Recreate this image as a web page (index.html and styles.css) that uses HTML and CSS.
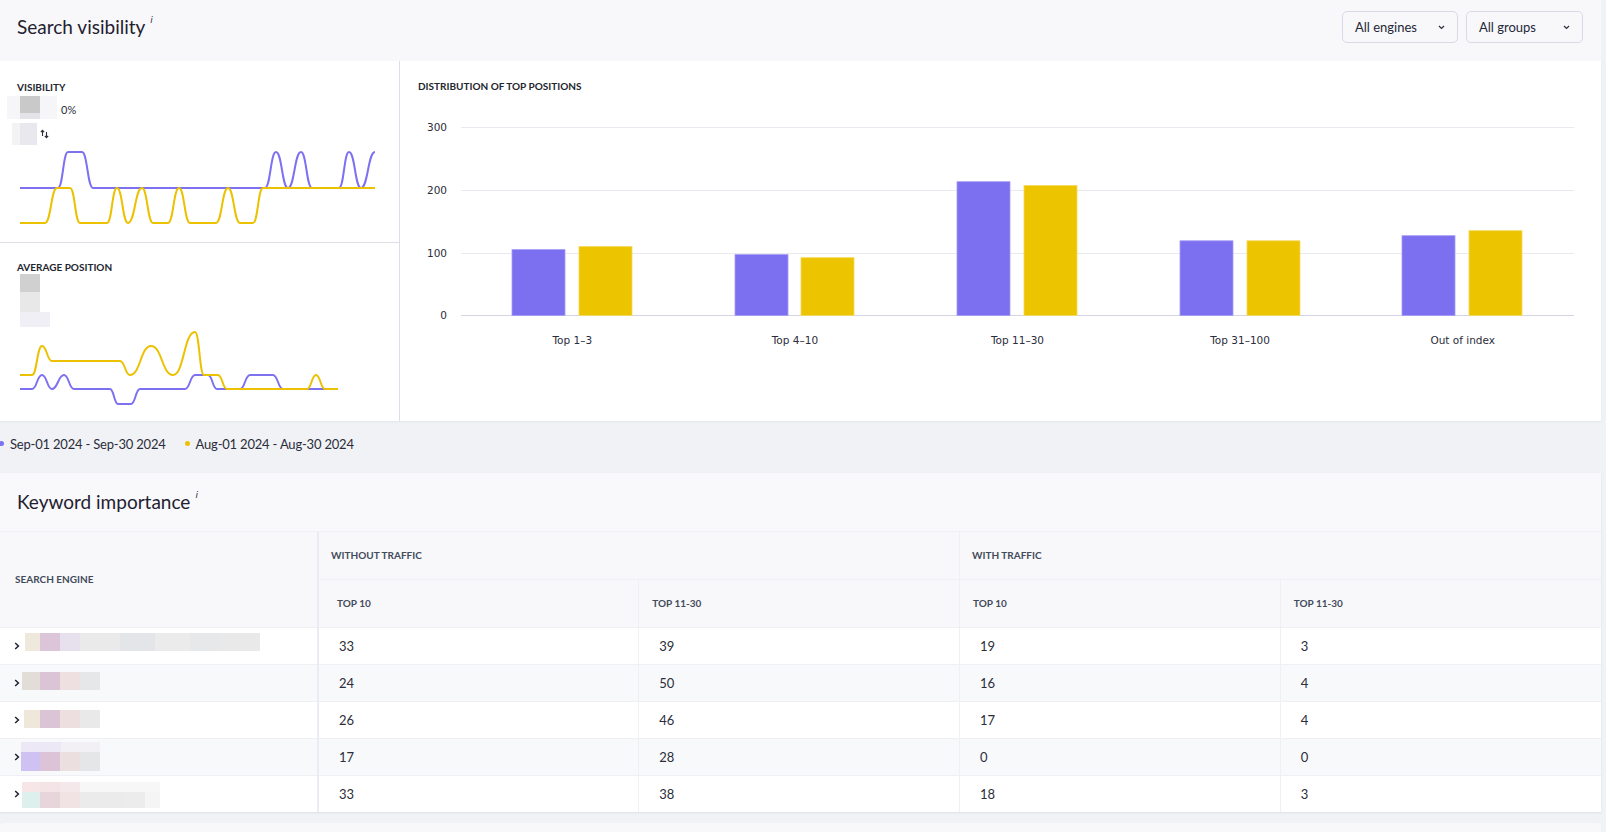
FILE: index.html
```html
<!DOCTYPE html>
<html lang="en">
<head>
<meta charset="utf-8">
<title>Search visibility</title>
<link rel="stylesheet" href="styles.css">
</head>
<body>
<div class="page">
  <section class="sv">
    <header class="sv-head">
      <h2 class="title">Search visibility<span class="info">i</span></h2>
      <div class="filters">
        <button class="select sel-engines">All engines<svg class="chev-down" width="7" height="5" viewBox="0 0 7 5"><path d="M1 1 L3.5 3.5 L6 1" fill="none" stroke="#2b2d3a" stroke-width="1.2"/></svg></button>
        <button class="select sel-groups">All groups<svg class="chev-down" width="7" height="5" viewBox="0 0 7 5"><path d="M1 1 L3.5 3.5 L6 1" fill="none" stroke="#2b2d3a" stroke-width="1.2"/></svg></button>
      </div>
    </header>
    <div class="sv-body">
      <div class="sv-left">
        <div class="mini mini-vis">
          <div class="label">Visibility</div>
          <div class="vis-row1"><span class="redact ra"><span class="ra-in"></span></span><span class="pct">0%</span></div>
          <div class="vis-row2"><span class="redact rb"></span>
            <svg class="arrows" width="9" height="10" viewBox="0 0 9 10"><path d="M2.5 7 V1.5 M0.8 3.2 L2.5 1.3 L4.2 3.2" fill="none" stroke="#2b2d3a" stroke-width="1.1"/><path d="M6.5 3 V8.5 M4.8 6.8 L6.5 8.7 L8.2 6.8" fill="none" stroke="#2b2d3a" stroke-width="1.1"/></svg>
          </div>
          <svg class="spark spark-vis" width="399" height="80" viewBox="0 0 399 80">
            <path class="ln-p" d="M20,40 L58,40 C63,40 63,4 68,4 L82,4 C87.5,4 87.5,40 93,40 L265,40 C270.5,40 270.5,4 276,4 C282,4 282,40 288,40 C294.5,40 294.5,4 301,4 C306.5,4 306.5,40 312,40 L339,40 C344,40 344,4 349,4 C355,4 355,40 361,40 C368,40 368,4 375,4"/>
            <path class="ln-y" d="M20,75 L45,75 C51,75 51,40 57,40 L70,40 C75,40 75,75 80,75 L107,75 C112,75 112,40 117,40 C122.5,40 122.5,75 128,75 C135,75 135,40 142,40 C147.5,40 147.5,75 153,75 L168,75 C173.5,75 173.5,40 179,40 C184.5,40 184.5,75 190,75 L216,75 C222,75 222,40 228,40 C234,40 234,75 240,75 L253,75 C258,75 258,40 263,40 L375,40"/>
          </svg>
        </div>
        <div class="mini mini-avg">
          <div class="label">Average position</div>
          <div class="avg-blocks"><span class="ab ab1"></span><span class="ab ab2"></span><span class="ab ab3"></span></div>
          <svg class="spark spark-avg" width="399" height="84" viewBox="0 0 399 84">
            <path class="ln-p" d="M20,62 L32,62 C37,62 37,48 42,48 C47,48 47,62 52,62 C58,62 58,48 64,48 C69,48 69,62 74,62 L110,62 C114,62 114,77 118,77 L131,77 C135.5,77 135.5,62 140,62 L185,62 C190,62 190,48 195,48 L208,48 C212.5,48 212.5,62 217,62 L240,62 C245,62 245,48 250,48 L273,48 C278,48 278,62 283,62 L338,62"/>
            <path class="ln-y" d="M20,48 L32,48 C37,48 37,19 42,19 C47,19 47,34 52,34 L120,34 C125,34 125,48 130,48 C140.5,48 140.5,19 151,19 C162,19 162,48 173,48 C184,48 184,5 195,5 C199.5,5 199.5,48 204,48 L218,48 C222.5,48 222.5,62 227,62 L307,62 C311.5,62 311.5,48 316,48 C320.5,48 320.5,62 325,62 L338,62"/>
          </svg>
        </div>
      </div>
      <div class="sv-right">
        <div class="label label-dist">Distribution of top positions</div>
        <svg class="bars" width="1201" height="329" viewBox="0 0 1201 329">
          <g class="grid">
            <line x1="61" x2="1174" y1="35.5" y2="35.5"/>
            <line x1="61" x2="1174" y1="98.5" y2="98.5"/>
            <line x1="61" x2="1174" y1="161.5" y2="161.5"/>
          </g>
          <line class="base" x1="61" x2="1174" y1="223.5" y2="223.5"/>
          <g class="ylab">
            <text x="47" y="39">300</text>
            <text x="47" y="102">200</text>
            <text x="47" y="165">100</text>
            <text x="47" y="227">0</text>
          </g>
          <g class="bp">
            <rect x="112" y="157.6" width="53" height="65.9"/>
            <rect x="335" y="162.6" width="53" height="60.9"/>
            <rect x="557" y="89.7" width="53" height="133.8"/>
            <rect x="780" y="148.8" width="53" height="74.7"/>
            <rect x="1002" y="143.7" width="53" height="79.8"/>
          </g>
          <g class="by">
            <rect x="179" y="154.5" width="53" height="69"/>
            <rect x="401" y="165.7" width="53" height="57.8"/>
            <rect x="624" y="93.5" width="53" height="130"/>
            <rect x="847" y="148.8" width="53" height="74.7"/>
            <rect x="1069" y="138.7" width="53" height="84.8"/>
          </g>
          <g class="xlab">
            <text x="172.3" y="252">Top 1–3</text>
            <text x="394.9" y="252">Top 4–10</text>
            <text x="617.5" y="252">Top 11–30</text>
            <text x="840.1" y="252">Top 31–100</text>
            <text x="1062.7" y="252">Out of index</text>
          </g>
        </svg>
      </div>
    </div>
  </section>

  <div class="legend">
    <span class="lg-item"><span class="dot dot-p"></span>Sep-01 2024 - Sep-30 2024</span>
    <span class="lg-item"><span class="dot dot-y"></span>Aug-01 2024 - Aug-30 2024</span>
  </div>

  <section class="ki">
    <header class="ki-head">
      <h2 class="title">Keyword importance<span class="info">i</span></h2>
    </header>
    <table class="kt">
      <colgroup>
        <col class="col-eng"><col class="col-n"><col class="col-n"><col class="col-n"><col class="col-n">
      </colgroup>
      <thead>
        <tr class="h1">
          <th rowspan="2" class="th-eng">Search engine</th>
          <th colspan="2" class="th-grp">Without traffic</th>
          <th colspan="2" class="th-grp">With traffic</th>
        </tr>
        <tr class="h2">
          <th class="th-sub th-first">Top 10</th>
          <th class="th-sub">Top 11-30</th>
          <th class="th-sub">Top 10</th>
          <th class="th-sub">Top 11-30</th>
        </tr>
      </thead>
      <tbody>
        <tr>
          <td class="eng"><div class="eng-in"><svg class="rchev" width="6" height="8" viewBox="0 0 6 8"><path d="M1.2 1 L4.4 4 L1.2 7" fill="none" stroke="#1f2130" stroke-width="1.5"/></svg><span class="rd rd1"></span></div></td>
          <td>33</td><td>39</td><td>19</td><td>3</td>
        </tr>
        <tr>
          <td class="eng"><div class="eng-in"><svg class="rchev" width="6" height="8" viewBox="0 0 6 8"><path d="M1.2 1 L4.4 4 L1.2 7" fill="none" stroke="#1f2130" stroke-width="1.5"/></svg><span class="rd rd2"></span></div></td>
          <td>24</td><td>50</td><td>16</td><td>4</td>
        </tr>
        <tr>
          <td class="eng"><div class="eng-in"><svg class="rchev" width="6" height="8" viewBox="0 0 6 8"><path d="M1.2 1 L4.4 4 L1.2 7" fill="none" stroke="#1f2130" stroke-width="1.5"/></svg><span class="rd rd3"></span></div></td>
          <td>26</td><td>46</td><td>17</td><td>4</td>
        </tr>
        <tr>
          <td class="eng"><div class="eng-in"><svg class="rchev" width="6" height="8" viewBox="0 0 6 8"><path d="M1.2 1 L4.4 4 L1.2 7" fill="none" stroke="#1f2130" stroke-width="1.5"/></svg><span class="rd rd4"></span></div></td>
          <td>17</td><td>28</td><td>0</td><td>0</td>
        </tr>
        <tr>
          <td class="eng"><div class="eng-in"><svg class="rchev" width="6" height="8" viewBox="0 0 6 8"><path d="M1.2 1 L4.4 4 L1.2 7" fill="none" stroke="#1f2130" stroke-width="1.5"/></svg><span class="rd rd5"></span></div></td>
          <td>33</td><td>38</td><td>18</td><td>3</td>
        </tr>
      </tbody>
    </table>
  </section>
  <div class="next-card"></div>
</div>
</body>
</html>
```
FILE: styles.css
```css
* { box-sizing: border-box; }

body {
  margin: 0;
  background: #f1f2f6;
  font-family: Lato, "Noto Sans", sans-serif;
  color: #2b2d3a;
}

.page { width: 1601px; }

/* ---------- Search visibility card ---------- */
.sv-head {
  height: 61px;
  padding: 11px 18px 0 17px;
  display: flex;
  justify-content: space-between;
  align-items: flex-start;
  background: #f8f8fb;
}

.title {
  margin: 0;
  font-size: 19px;
  font-weight: 400;
  line-height: 32px;
  color: #1f2130;
  display: flex;
  align-items: flex-start;
}

.info {
  font-family: "DejaVu Sans", sans-serif;
  font-style: italic;
  font-size: 9px;
  line-height: 9px;
  margin: 5px 0 0 5px;
  color: #2b2d3a;
}

.filters { display: flex; gap: 8px; }

.select {
  height: 32px;
  border: 1px solid #dadae6;
  border-radius: 5px;
  background: #f8f8fb;
  display: flex;
  align-items: center;
  justify-content: space-between;
  padding: 0 12px 0 12px;
  font-family: Lato, "Noto Sans", sans-serif;
  font-size: 13px;
  color: #252737;
}
.sel-engines { width: 116px; }
.sel-groups { width: 117px; }

.sv-body {
  height: 360px;
  display: flex;
  background: #fff;
  box-shadow: 0 1px 2px rgba(30, 30, 60, 0.06);
}

.sv-left {
  width: 400px;
  border-right: 1px solid #dedee9;
  display: flex;
  flex-direction: column;
}

.mini-vis {
  height: 182px;
  border-bottom: 1px solid #dedee9;
}
.mini-avg { flex: 1; }

.label {
  font-size: 10px;
  font-weight: 700;
  line-height: 12px;
  text-transform: uppercase;
  color: #23252f;
  padding-left: 17px;
}
.mini-vis .label { margin-top: 20px; }
.mini-avg .label { margin-top: 18px; }

.vis-row1 {
  margin-top: 3px;
  height: 23px;
  padding-left: 7px;
  display: flex;
  align-items: center;
  gap: 4px;
}
.ra {
  width: 50px;
  height: 23px;
  background: #f6f6f8;
  padding-left: 13px;
  display: block;
}
.ra-in {
  display: block;
  width: 20px;
  height: 23px;
  background: linear-gradient(#c9c9c9 0 17px, #e4e4e8 17px 23px);
}
.pct { font-size: 11px; color: #2b2d3a; padding-top: 4px; }

.vis-row2 {
  margin-top: 4px;
  height: 22px;
  padding-left: 12px;
  display: flex;
  align-items: center;
  gap: 3px;
}
.rb {
  width: 25px;
  height: 22px;
  background: linear-gradient(to right, #f3f3f6 0 8px, #e8e8ee 8px 25px);
}
.arrows { display: block; }

.spark { display: block; }
.spark-vis { margin-top: 3px; }

.ln-p, .ln-y { fill: none; stroke-width: 2; stroke-linejoin: round; }
.ln-p { stroke: #7d70f1; }
.ln-y { stroke: #ecc100; }

.avg-blocks {
  margin-top: 1px;
  height: 53px;
  padding-left: 20px;
  display: flex;
  flex-direction: column;
}
.ab { display: block; }
.ab1 { width: 20px; height: 18px; background: #d0d0d0; }
.ab2 { width: 20px; height: 20px; background: #e8e8e8; }
.ab3 { width: 30px; height: 15px; background: #efeff5; }

.sv-right { flex: 1; }
.label-dist { margin-top: 19px; padding-left: 18px; }
.bars { display: block; }

.grid line { stroke: #e9e9ef; stroke-width: 1; }
.base { stroke: #d3d5e4; stroke-width: 1; }
.ylab text {
  font-family: "DejaVu Sans", sans-serif;
  font-size: 10.5px;
  fill: #2b2d3a;
  text-anchor: end;
}
.xlab text {
  font-family: "DejaVu Sans", sans-serif;
  font-size: 10.5px;
  fill: #2b2d3a;
  text-anchor: middle;
}
.bp rect { fill: #7c6ff0; stroke: #a59cf6; stroke-width: 0.8; }
.by rect { fill: #edc400; stroke: #f4da5c; stroke-width: 0.8; }

/* ---------- Legend ---------- */
.legend {
  height: 52px;
  padding-bottom: 7px;
  display: flex;
  align-items: center;
  gap: 19px;
  font-size: 13px;
  letter-spacing: -0.2px;
  color: #2b2d3a;
}
.lg-item { display: flex; align-items: center; }
.dot {
  width: 5px;
  height: 5px;
  border-radius: 50%;
  margin-right: 6px;
}
.dot-p { background: #7d70f1; margin-left: -1px; }
.dot-y { background: #ecc100; }

/* ---------- Keyword importance ---------- */
.ki {
  background: #fff;
  box-shadow: 0 1px 2px rgba(30, 30, 60, 0.08);
}
.ki-head {
  height: 59px;
  padding-left: 17px;
  display: flex;
  align-items: center;
  background: #f9f9fb;
  border-bottom: 1px solid #efeff4;
}

.kt {
  width: 1601px;
  border-collapse: collapse;
  table-layout: fixed;
}
.col-eng { width: 318px; }
.col-n { width: 320.75px; }

.kt th {
  background: #f8f8fa;
  text-align: left;
  font-size: 10px;
  font-weight: 700;
  text-transform: uppercase;
  color: #434b5a;
  padding: 0 0 0 13px;
  border: 1px solid #efeff4;
  border-top: 0;
}
.kt .h1 th { height: 47px; }
.kt .h2 th { height: 48px; }
.kt th.th-eng { padding-left: 15px; border-left: 0; border-right: 2px solid #ebebf3; }
.kt th.th-grp { padding-left: 12px; }
.kt th.th-first { padding-left: 18px; }
.kt th:last-child { border-right: 0; }

.kt td {
  height: 37px;
  padding: 0 0 0 20px;
  font-size: 13px;
  color: #2b2d3a;
  border: 1px solid #efeff4;
}
.kt td:last-child { border-right: 0; }
.kt td.eng { padding-left: 14px; border-left: 0; border-right: 2px solid #ebebf3; }
.kt tbody tr:nth-child(even) td { background: #f8f9fb; }
.kt tbody tr:last-child td { border-bottom: 0; }

.eng-in { display: flex; align-items: center; gap: 2px; }
.rchev { display: block; flex: none; }

.rd { display: block; }
.rd1 {
  width: 235px;
  height: 18px;
  margin: -8px 0 0 3px;
  background: linear-gradient(to right, #efe8dc 0 15px, #dcc4d9 15px 35px, #e6e1ec 35px 55px, #eaeaeb 55px 95px, #e4e5e8 95px 130px, #ebebeb 130px 165px, #e7e8ea 165px 195px, #e9e9ea 195px 235px);
}
.rd2 {
  width: 78px;
  height: 18px;
  margin-top: -4px;
  background: linear-gradient(to right, #e2ddd6 0 18px, #dbc4d6 18px 38px, #eedfe0 38px 58px, #e6e7e8 58px 78px);
}
.rd3 {
  width: 76px;
  height: 18px;
  margin: -2px 0 0 2px;
  background: linear-gradient(to right, #efe7da 0 16px, #dcc4d7 16px 36px, #eddfe0 36px 56px, #e9e9ea 56px 76px);
}
.rd4 {
  width: 79px;
  height: 29px;
  margin-left: -1px;
  background:
    linear-gradient(to right, #cfc2f2 0 19px, #dcc3d7 19px 39px, #ecdfe0 39px 59px, #e4e6e7 59px 79px) 0 10px / 79px 19px no-repeat,
    linear-gradient(to right, #ece8f5 0 40px, #f2f0f5 40px 79px) 0 0 / 79px 10px no-repeat;
}
.rd5 {
  width: 138px;
  height: 26px;
  margin-top: 3px;
  background:
    linear-gradient(to right, #def0ec 0 18px, #e7d5db 18px 38px, #f1e3e3 38px 58px, #ebebeb 58px 103px, #ececec 103px 123px, #f5f5f5 123px 138px) 0 10px / 138px 16px no-repeat,
    linear-gradient(to right, #f6e6e8 0 18px, #f5e4e6 18px 38px, #f4e8ea 38px 58px, #f7f7f7 58px 110px) 0 0 / 138px 10px no-repeat;
}

.next-card {
  margin-top: 11px;
  height: 20px;
  background: #f8f8fa;
  border-radius: 4px 4px 0 0;
}
```
